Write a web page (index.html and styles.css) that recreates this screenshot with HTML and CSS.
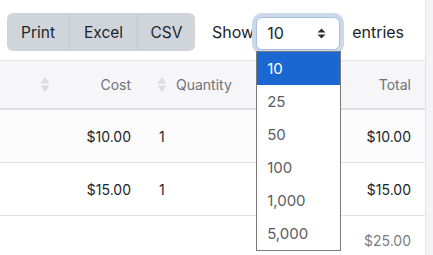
FILE: index.html
```html
<!DOCTYPE html>
<html>
<head>
<meta charset="utf-8">
<link rel="stylesheet" href="styles.css">
</head>
<body>
<div class="page">
  <div class="main">
    <div class="toolbar">
      <div class="btn-group">
        <span class="btn btn-print">Print</span>
        <span class="btn btn-excel">Excel</span>
        <span class="btn btn-csv">CSV</span>
      </div>
      <span class="show">Show</span>
      <div class="select-wrap">
        <div class="select">
          <span>10</span>
          <svg class="caret" width="9" height="11" viewBox="0 0 9 11"><path d="M4.5 0.5 L8.5 4.5 H0.5 Z M4.5 10.5 L8.5 6.5 H0.5 Z" fill="#2b2f33"/></svg>
        </div>
        <ul class="options">
          <li class="opt selected">10</li>
          <li class="opt">25</li>
          <li class="opt">50</li>
          <li class="opt">100</li>
          <li class="opt">1,000</li>
          <li class="opt">5,000</li>
        </ul>
      </div>
      <span class="entries">entries</span>
    </div>
    <div class="table">
      <div class="row head">
        <div class="cell c-cost">
          <svg class="sort" width="10" height="17" viewBox="0 0 10 17"><path d="M5 1 L9.5 7.5 H0.5 Z M5 16 L9.5 9.5 H0.5 Z" fill="#dcdde0"/></svg>
          <span class="push">Cost</span>
        </div>
        <div class="cell c-qty">
          <svg class="sort" width="10" height="17" viewBox="0 0 10 17"><path d="M5 1 L9.5 7.5 H0.5 Z M5 16 L9.5 9.5 H0.5 Z" fill="#dcdde0"/></svg>
          <span class="qty-label">Quantity</span>
        </div>
        <div class="cell c-total"><span class="push">Total</span></div>
      </div>
      <div class="row body odd">
        <div class="cell c-cost"><span class="push">$10.00</span></div>
        <div class="cell c-qty"><span class="qty-val">1</span></div>
        <div class="cell c-total"><span class="push">$10.00</span></div>
      </div>
      <div class="row body">
        <div class="cell c-cost"><span class="push">$15.00</span></div>
        <div class="cell c-qty"><span class="qty-val">1</span></div>
        <div class="cell c-total"><span class="push">$15.00</span></div>
      </div>
      <div class="row foot">
        <div class="cell c-cost"></div>
        <div class="cell c-qty"></div>
        <div class="cell c-total"><span class="push">$25.00</span></div>
      </div>
    </div>
  </div>
  <div class="strip"></div>
</div>
</body>
</html>
```
FILE: styles.css
```css
* { box-sizing: border-box; }
html, body { margin: 0; padding: 0; }
body {
  font-family: Inter, "Noto Sans", sans-serif;
  color: #212529;
  background: #fff;
  width: 433px;
  height: 255px;
  overflow: hidden;
}
.page { display: flex; height: 255px; }
.main { width: 425px; }
.strip { width: 8px; background: #f4f4f6; border-left: 1px solid #e3e3e6; }

.toolbar {
  display: flex;
  align-items: center;
  padding: 13px 0 0 7px;
  height: 51px;
  font-size: 16px;
}
.btn-group {
  display: flex;
  height: 38px;
  background: #d0d5dc;
  border-radius: 6px;
  overflow: hidden;
  font-size: 15.5px;
}
.btn {
  display: flex;
  align-items: center;
  justify-content: center;
  height: 38px;
  color: #212529;
}
.btn-print { width: 63px; border-right: 1px solid #c2c8d0; }
.btn-excel { width: 68px; border-right: 1px solid #c2c8d0; }
.btn-csv { width: 57px; }
.show { margin-left: 17px; color: #212529; }
.select-wrap { position: relative; margin-left: 2px; }
.select {
  width: 84px;
  height: 33px;
  border: 1px solid #a9bfdb;
  border-radius: 6px;
  box-shadow: 0 0 0 4px #cad8e8;
  display: flex;
  align-items: center;
  justify-content: space-between;
  padding: 0 13px 0 10px;
  background: #fff;
  margin-top: 2px;
}
.caret { display: block; }
.entries { margin-left: 12px; }

.options {
  position: absolute;
  left: 0;
  top: 36px;
  width: 85px;
  margin: 0;
  padding: 0;
  list-style: none;
  background: #fff;
  border: 1px solid #7a7a7a;
  z-index: 5;
}
.opt {
  height: 33px;
  display: flex;
  align-items: center;
  padding-left: 10px;
  color: #5a5d62;
  font-size: 15px;
}
.opt.selected { background: #1a67d2; color: #fff; }

.table { margin-top: 9px; font-size: 14px; }
.row { display: flex; }
.cell { display: flex; align-items: center; }
.c-cost { width: 145px; padding: 0 14px 0 40px; }
.c-qty { width: 155px; padding-left: 12px; }
.c-total { width: 125px; padding-right: 14px; }
.push { margin-left: auto; }
.head {
  height: 50px;
  background: #f6f6f8;
  border-top: 1px solid #e4e4e7;
  border-bottom: 2px solid #dedfe2;
  color: #6f7277;
}
.sort { display: block; }
.qty-label { margin-left: 9px; }
.qty-val { margin-left: 2px; }
.body { height: 53px; border-bottom: 1px solid #e3e3e6; }
.body.odd { background: #fcfcfc; height: 53px; }
.foot { height: 48px; color: #7a7d82; }
```
